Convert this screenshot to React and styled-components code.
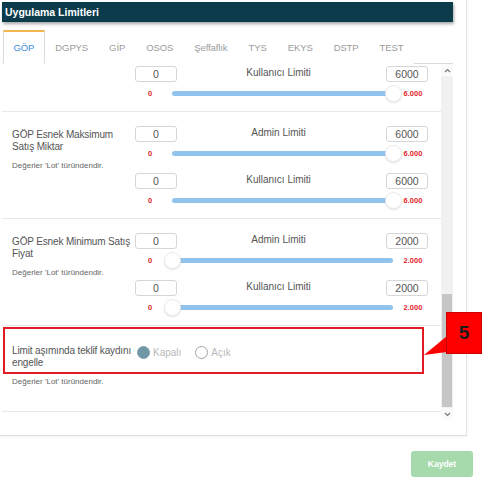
import React, { useLayoutEffect, useRef } from "react";
import styled, { createGlobalStyle } from "styled-components";

const GlobalStyle = createGlobalStyle`
  html, body {
    margin: 0;
    padding: 0;
    background: #ffffff;
  }
  body {
    font-family: "Liberation Sans", Arial, sans-serif;
  }
  * {
    box-sizing: border-box;
  }
`;

const tabs = ["GÖP", "DGPYS", "GİP", "OSOS", "Şeffaflık", "TYS", "EKYS", "DSTP", "TEST"];

const maxRange = (max) => [
  { label: "Admin Limiti", min: 0, max, thumb: "end" },
  { label: "Kullanıcı Limiti", min: 0, max, thumb: "end" },
];

const minRange = (max) => [
  { label: "Admin Limiti", min: 0, max, thumb: "start" },
  { label: "Kullanıcı Limiti", min: 0, max, thumb: "start" },
];

// only the tail of the list is in view; earlier rows are scrolled past
const sections = [
  { title: "GÖP Esnek Maksimum Alış Miktar", limits: maxRange(6000) },
  { title: "GÖP Esnek Maksimum Satış Miktar", limits: maxRange(6000) },
  { title: "GÖP Esnek Minimum Satış Fiyat", limits: minRange(2000) },
];

const NOTE = "Değerler 'Lot' türündendir.";
const SCROLL_TOP = 59;

const fmt = (n) => String(n).replace(/\B(?=(\d{3})+(?!\d))/g, ".");

const Page = styled.div`
  position: relative;
  width: 487px;
  height: 484px;
  overflow: hidden;
`;

const Card = styled.div`
  width: 467px;
  padding: 2px 13px 15px 2px;
  border-right: 1px solid #e3e3e3;
  border-bottom: 1px solid #e0e0e0;
  box-shadow: 0 1px 3px rgba(0, 0, 0, 0.06);
  background: #fff;
`;

const Header = styled.div`
  height: 20px;
  display: flex;
  align-items: center;
  padding-left: 3px;
  background: #0c3b4c;
  color: #fff;
  font-size: 10.5px;
  font-weight: bold;
  box-shadow: 1px 2px 3px rgba(0, 0, 0, 0.35);
`;

const TabBar = styled.div`
  margin-top: 8px;
  height: 34px;
  display: flex;
  padding-left: 1px;
  border-bottom: 1px solid #dcdcdc;
`;

const Tab = styled.div`
  height: 34px;
  margin-bottom: -1px;
  padding: 0 9.5px;
  display: flex;
  align-items: center;
  font-size: 9.5px;
  letter-spacing: -0.1px;
  color: ${(p) => (p.$active ? "#3b8ed8" : "#9c9c9c")};
  background: #fff;
  border: 1px solid ${(p) => (p.$active ? "#dcdcdc" : "transparent")};
  border-top: 2px solid ${(p) => (p.$active ? "#f3b64f" : "transparent")};
  border-bottom-color: ${(p) => (p.$active ? "#fff" : "transparent")};
`;

const Body = styled.div`
  display: flex;
  height: 356px;
`;

const Viewport = styled.div`
  flex: 1;
  height: 100%;
  overflow: hidden;
`;

const Content = styled.div`
  padding-bottom: 9px;
`;

const Section = styled.div`
  display: flex;
  padding: ${(p) => p.$pad};
  border-bottom: 1px solid #e8e8e8;
`;

const LeftCol = styled.div`
  width: 133px;
  flex-shrink: 0;
  padding: ${(p) => p.$top || 0}px 0 0 10px;
`;

const Title = styled.div`
  font-size: 10px;
  line-height: 12px;
  letter-spacing: -0.15px;
  color: #555;
`;

const Note = styled.div`
  margin-top: 8px;
  font-size: 8px;
  line-height: 10px;
  color: #666;
`;

const RightCol = styled.div`
  width: 293px;
  display: flex;
  flex-direction: column;
  gap: 12px;
`;

const InputRow = styled.div`
  height: 16px;
  display: flex;
  align-items: center;
`;

const ValueBox = styled.div`
  width: 42px;
  height: 16px;
  border: 1px solid #d6d6d6;
  border-radius: 3px;
  font-size: 10.5px;
  line-height: 14px;
  color: #555;
  text-align: center;
`;

const LimitLabel = styled.div`
  flex: 1;
  padding-right: 6px;
  padding-bottom: 3px;
  text-align: center;
  font-size: 10px;
  color: #555;
`;

const SliderRow = styled.div`
  margin-top: 3px;
  height: 16px;
  display: flex;
  align-items: center;
`;

const RangeText = styled.div`
  width: 30px;
  text-align: center;
  font-size: 7.5px;
  font-weight: bold;
  color: #e3262c;
`;

const TrackArea = styled.div`
  position: relative;
  flex: 1;
  height: 16px;
  display: flex;
  align-items: center;
  padding: 0 5px 0 7px;
`;

const Track = styled.div`
  width: 100%;
  height: 5px;
  border-radius: 3px;
  background: #91c3ef;
`;

const Thumb = styled.div`
  position: absolute;
  top: 0;
  ${(p) => (p.$at === "end" ? "right: -3.5px;" : "left: -1.5px;")}
  width: 17px;
  height: 17px;
  border-radius: 50%;
  background: #fff;
  border: 1px solid #ececec;
  box-shadow: 0 1px 2px rgba(0, 0, 0, 0.12);
`;

const RadioGroup = styled.div`
  display: flex;
  align-items: center;
  margin-left: 2px;
  height: 13px;
  margin-top: 1px;
`;

const RadioOption = styled.div`
  display: flex;
  align-items: center;
  gap: 3px;
  margin-right: 14px;
  font-size: 10px;
  color: #b9b9b9;
`;

const RadioDot = styled.span`
  width: 13px;
  height: 13px;
  border-radius: 50%;
  background: ${(p) => (p.$checked ? "#6f97a4" : "#fff")};
  border: 1.5px solid ${(p) => (p.$checked ? "#7ea2ae" : "#a3a3a3")};
`;

const ScrollBar = styled.div`
  width: 12px;
  display: flex;
  flex-direction: column;
  background: #f1f1f1;
`;

const ScrollArrow = styled.div`
  height: 12px;
  display: flex;
  align-items: center;
  justify-content: center;
  background: #fafafa;
`;

const ScrollTrack = styled.div`
  flex: 1;
  padding-top: ${(p) => p.$offset}px;
`;

const ScrollThumb = styled.div`
  height: ${(p) => p.$size}px;
  margin: 0 1px;
  background: #c6c6c6;
`;

const Footer = styled.div`
  display: flex;
  justify-content: flex-end;
  padding: 15px 14px 0 0;
`;

const SaveButton = styled.button`
  width: 62px;
  height: 26px;
  border: none;
  border-radius: 3px;
  background: #a6d9ab;
  color: #fff;
  font-family: "Liberation Sans", Arial, sans-serif;
  font-size: 8.5px;
  font-weight: bold;
`;

const Highlight = styled.div`
  position: absolute;
  left: 3px;
  top: 327px;
  width: 421px;
  height: 47px;
  border: 2px solid #e21b23;
  pointer-events: none;
`;

const Callout = styled.div`
  position: absolute;
  left: 446px;
  top: 312px;
  width: 36px;
  height: 42px;
  display: flex;
  align-items: center;
  justify-content: center;
  background: #ff0000;
  border: 1px solid #c40000;
  color: #1b1b1b;
  font-size: 19px;
  font-weight: bold;
`;

const CalloutTail = styled.svg`
  position: absolute;
  left: 420px;
  top: 330px;
`;

const Chevron = ({ up }) => (
  <svg width="7" height="5" viewBox="0 0 7 5">
    <polyline
      points={up ? "1,4 3.5,1.5 6,4" : "1,1 3.5,3.5 6,1"}
      fill="none"
      stroke="#777"
      strokeWidth="1.2"
    />
  </svg>
);

const LimitBlock = ({ label, min, max, thumb }) => (
  <div>
    <InputRow>
      <ValueBox>{min}</ValueBox>
      <LimitLabel>{label}</LimitLabel>
      <ValueBox>{max}</ValueBox>
    </InputRow>
    <SliderRow>
      <RangeText>{min}</RangeText>
      <TrackArea>
        <Track />
        <Thumb $at={thumb} />
      </TrackArea>
      <RangeText>{fmt(max)}</RangeText>
    </SliderRow>
  </div>
);

export default function App() {
  const viewRef = useRef(null);

  useLayoutEffect(() => {
    if (viewRef.current) viewRef.current.scrollTop = SCROLL_TOP;
  }, []);

  return (
    <Page>
      <GlobalStyle />
      <Card>
        <Header>Uygulama Limitleri</Header>
        <TabBar>
          {tabs.map((t, i) => (
            <Tab key={t} $active={i === 0}>
              {t}
            </Tab>
          ))}
        </TabBar>
        <Body>
          <Viewport ref={viewRef}>
            <Content>
              {sections.map((s) => (
                <Section key={s.title} $pad="14px 0 10px">
                  <LeftCol $top={3}>
                    <Title>{s.title}</Title>
                    <Note>{NOTE}</Note>
                  </LeftCol>
                  <RightCol>
                    {s.limits.map((l) => (
                      <LimitBlock key={l.label} {...l} />
                    ))}
                  </RightCol>
                </Section>
              ))}
              <Section $pad="19px 0 24px">
                <LeftCol>
                  <Title>Limit aşımında teklif kaydını engelle</Title>
                  <Note>{NOTE}</Note>
                </LeftCol>
                <RadioGroup>
                  <RadioOption>
                    <RadioDot $checked />
                    Kapalı
                  </RadioOption>
                  <RadioOption>
                    <RadioDot />
                    Açık
                  </RadioOption>
                </RadioGroup>
              </Section>
            </Content>
          </Viewport>
          <ScrollBar>
            <ScrollArrow>
              <Chevron up />
            </ScrollArrow>
            <ScrollTrack $offset={218}>
              <ScrollThumb $size={113} />
            </ScrollTrack>
            <ScrollArrow>
              <Chevron />
            </ScrollArrow>
          </ScrollBar>
        </Body>
      </Card>
      <Footer>
        <SaveButton>Kaydet</SaveButton>
      </Footer>
      <Highlight />
      <CalloutTail width="30" height="28" viewBox="0 0 30 28">
        <polygon points="27,6 27,22 4,25" fill="#ff0000" />
      </CalloutTail>
      <Callout>5</Callout>
    </Page>
  );
}
